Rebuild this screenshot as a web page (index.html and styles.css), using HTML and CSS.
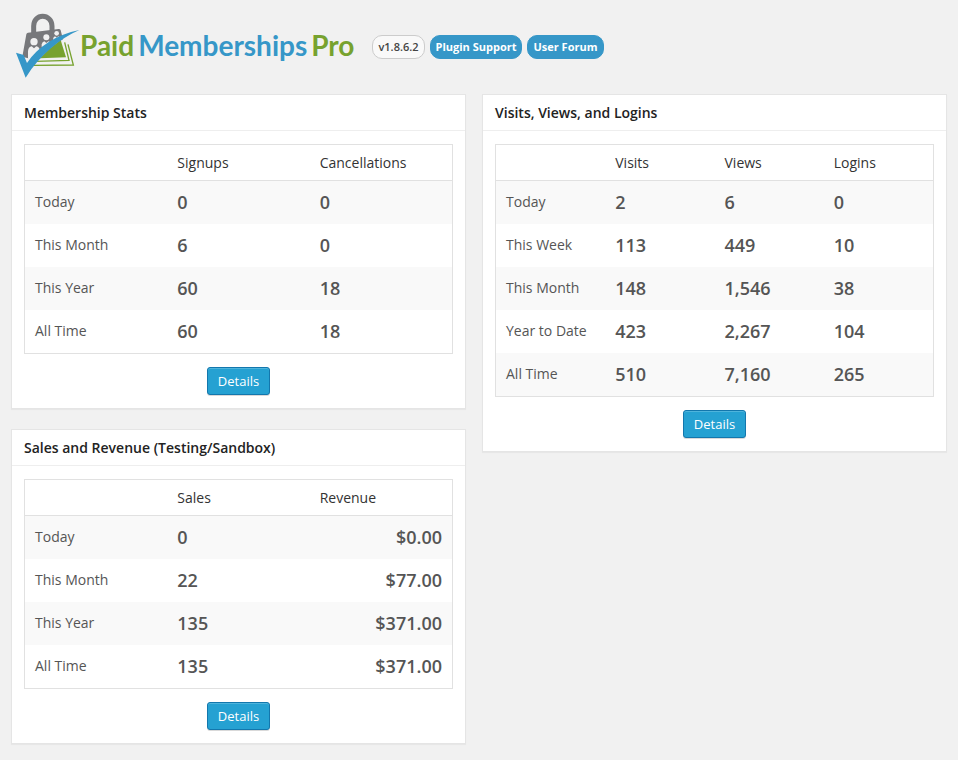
FILE: index.html
```html
<!DOCTYPE html>
<html lang="en">
<head>
    <meta charset="UTF-8">
    <meta name="viewport" content="width=device-width, initial-scale=1">
    <title>Reports - Paid Memberships Pro</title>
    <link rel="stylesheet" href="styles.css">
</head>
<body>

<header class="pmpro-header">
    <a class="logo" href="#">
        <svg class="logo-mark" viewBox="18 15 192 195" aria-hidden="true">
            <!-- padlock -->
            <path fill="none" stroke="#77787b" stroke-width="15" d="M71 78V54c0-17 12-29 27-29s28 12 28 29v18"/>
            <path fill="#77787b" d="M54 74L146 63Q151 63 152 67L159 94L60 152L37 146L49 79Q50 75 54 74z"/>
            <!-- members -->
            <g fill="#f1f1f1">
                <circle cx="72" cy="101" r="11"/>
                <path d="M54 152V130Q55 117 65 115L72 121L79 115Q89 117 90 130L62 154z"/>
                <circle cx="109" cy="88" r="9"/>
                <path d="M95 116V109Q97 101 103 100L109 105L115 100Q121 101 123 108L98 122z"/>
                <circle cx="140" cy="76" r="7"/>
                <path d="M129 98V94Q130 87 135 85L140 89L145 85Q150 87 152 92L134 102z"/>
            </g>
            <!-- bills -->
            <path fill="#77a22f" d="M152 96L168 148L90 151L118 122z"/>
            <path fill="none" stroke="#77a22f" stroke-width="4" d="M164 103L177 157L76 160M174 109L190 171L68 172"/>
            <!-- check -->
            <path fill="#3697c8" d="M18 134L41 141L51 165C84 115 140 80 208 66C150 92 90 140 47 209z"/>
        </svg>
        <span class="logo-text"><span>Paid</span><span class="blue">Memberships</span><span>Pro</span></span>
    </a>
    <nav class="tags">
        <span class="tag tag-grey">v1.8.6.2</span>
        <a class="tag tag-blue" href="#">Plugin Support</a>
        <a class="tag tag-blue" href="#">User Forum</a>
    </nav>
</header>

<main class="reports">
    <div class="column">
        <section class="postbox">
            <h2>Membership Stats</h2>
            <div class="inside">
                <table>
                    <thead>
                        <tr><td></td><th scope="col">Signups</th><th scope="col">Cancellations</th></tr>
                    </thead>
                    <tbody>
                        <tr><th scope="row">Today</th><td>0</td><td>0</td></tr>
                        <tr><th scope="row">This Month</th><td>6</td><td>0</td></tr>
                        <tr><th scope="row">This Year</th><td>60</td><td>18</td></tr>
                        <tr><th scope="row">All Time</th><td>60</td><td>18</td></tr>
                    </tbody>
                </table>
                <a class="button-primary" href="#">Details</a>
            </div>
        </section>

        <section class="postbox">
            <h2>Sales and Revenue (Testing/Sandbox)</h2>
            <div class="inside">
                <table>
                    <thead>
                        <tr><td></td><th scope="col">Sales</th><th scope="col">Revenue</th></tr>
                    </thead>
                    <tbody>
                        <tr><th scope="row">Today</th><td>0</td><td class="money">$0.00</td></tr>
                        <tr><th scope="row">This Month</th><td>22</td><td class="money">$77.00</td></tr>
                        <tr><th scope="row">This Year</th><td>135</td><td class="money">$371.00</td></tr>
                        <tr><th scope="row">All Time</th><td>135</td><td class="money">$371.00</td></tr>
                    </tbody>
                </table>
                <a class="button-primary" href="#">Details</a>
            </div>
        </section>
    </div>

    <div class="column">
        <section class="postbox">
            <h2>Visits, Views, and Logins</h2>
            <div class="inside">
                <table>
                    <thead>
                        <tr><td></td><th scope="col">Visits</th><th scope="col">Views</th><th scope="col">Logins</th></tr>
                    </thead>
                    <tbody>
                        <tr><th scope="row">Today</th><td>2</td><td>6</td><td>0</td></tr>
                        <tr><th scope="row">This Week</th><td>113</td><td>449</td><td>10</td></tr>
                        <tr><th scope="row">This Month</th><td>148</td><td>1,546</td><td>38</td></tr>
                        <tr><th scope="row">Year to Date</th><td>423</td><td>2,267</td><td>104</td></tr>
                        <tr><th scope="row">All Time</th><td>510</td><td>7,160</td><td>265</td></tr>
                    </tbody>
                </table>
                <a class="button-primary" href="#">Details</a>
            </div>
        </section>
    </div>
</main>

</body>
</html>
```

FILE: styles.css
```css
* {
    box-sizing: border-box;
}

body {
    margin: 0;
    padding: 13px 11px 16px;
    background: #f1f1f1;
    color: #555;
    font-family: "Open Sans", sans-serif;
    font-size: 14px;
}

a {
    text-decoration: none;
}

/* header */
.pmpro-header {
    display: flex;
    align-items: center;
    gap: 18px;
    padding-left: 5px;
    margin-bottom: 16px;
}

.logo {
    display: flex;
    align-items: center;
}

.logo-mark {
    width: 64px;
    height: 65px;
}

.logo-text {
    display: flex;
    gap: 4px;
    padding-bottom: 2px;
    color: #77a22f;
    font-family: Lato, sans-serif;
    font-size: 28px;
    font-weight: 700;
    line-height: 36px;
}

.logo-text .blue {
    color: #3697c8;
}

.tags {
    display: flex;
    gap: 5px;
    padding-top: 2px;
}

.tag {
    padding: 0 5px;
    border: 1px solid #3697c8;
    border-radius: 10px;
    font-size: 11px;
    font-weight: 700;
    line-height: 22px;
}

.tag-grey {
    border-color: #ccc;
    background: #f9f9f9;
    color: #444;
    font-weight: 600;
}

.tag-blue {
    background: #3697c8;
    color: #fff;
}

/* report boxes */
.reports {
    display: grid;
    grid-template-columns: 455fr 465fr;
    align-items: start;
    gap: 16px;
}

.column {
    display: flex;
    flex-direction: column;
    gap: 20px;
}

.postbox {
    border: 1px solid #e5e5e5;
    background: #fff;
    box-shadow: 0 1px 1px rgba(0, 0, 0, 0.04);
}

.postbox h2 {
    margin: 0;
    padding: 0 12px;
    border-bottom: 1px solid #eee;
    color: #222;
    font-size: 14px;
    font-weight: 600;
    line-height: 35px;
}

.inside {
    display: flex;
    flex-direction: column;
    align-items: center;
    gap: 13px;
    padding: 13px 12px;
}

table {
    width: 100%;
    table-layout: fixed;
    border: 1px solid #e1e1e1;
    border-spacing: 0;
}

th,
td {
    height: 43px;
    padding: 0 10px 2px;
    text-align: left;
    font-weight: 400;
}

thead th,
thead td {
    height: 36px;
    padding-bottom: 0;
    border-bottom: 1px solid #e1e1e1;
    color: #333;
}

tbody td {
    font-size: 18px;
    font-weight: 600;
}

tbody tr:nth-child(odd) {
    background: #f9f9f9;
}

tbody .money {
    text-align: right;
}

.button-primary {
    padding: 0 10px;
    border: 1px solid #1377ad;
    border-radius: 3px;
    background: #25a1d2;
    box-shadow: inset 0 1px 0 rgba(120, 200, 230, 0.5), 0 1px 0 rgba(0, 0, 0, 0.15);
    color: #fff;
    font-size: 13px;
    line-height: 26px;
}
```
